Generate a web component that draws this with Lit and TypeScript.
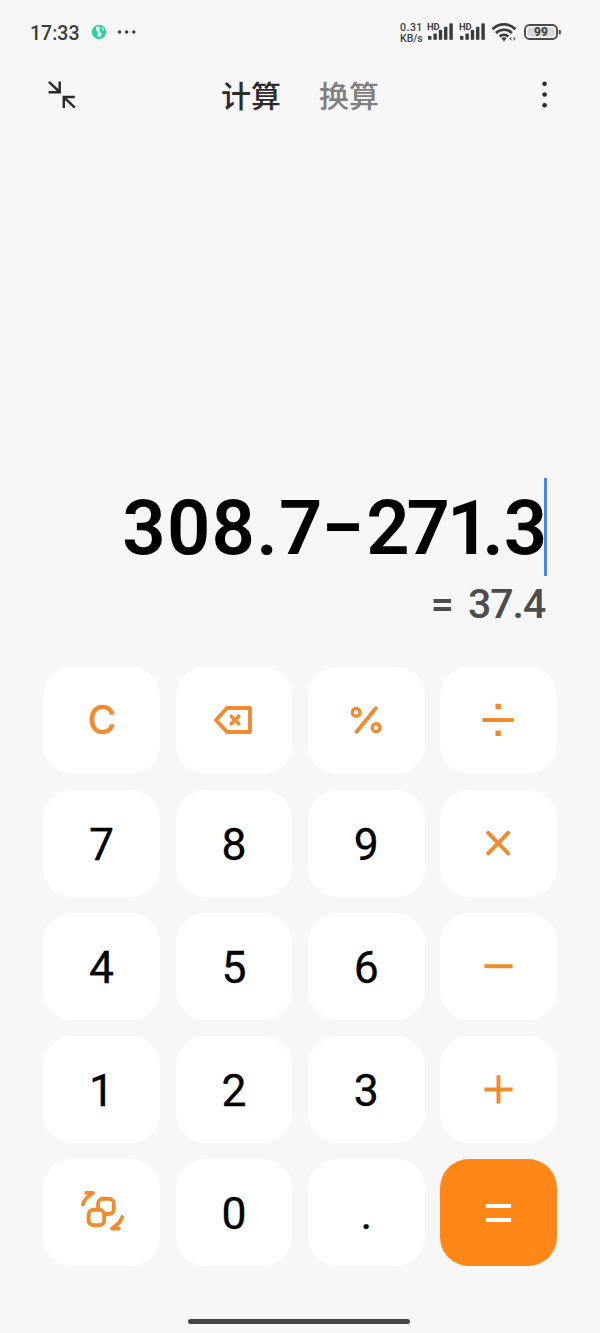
import { LitElement, html, svg, css } from "lit";
import { customElement, property } from "lit/decorators.js";

const signal = svg`
  <rect x="1" y="14" width="3.4" height="3.8"/><rect x="6.4" y="11.5" width="3.4" height="6.3"/>
  <rect x="11.8" y="8" width="3.4" height="9.8"/><rect x="17" y="4.8" width="3.4" height="13"/>
  <rect x="22.4" y="1.4" width="3.4" height="16.4"/>`;

@customElement("status-bar")
class StatusBar extends LitElement {
  static styles = css`
    :host { display: flex; height: 64px; align-items: center; color: #3c3c3c; box-sizing: border-box;
      padding: 0 38px 0 30px; font-family: Roboto, "Noto Sans", sans-serif; }
    .time { font-size: 19.5px; font-weight: 500; line-height: 24px; width: 62px; letter-spacing: 0; padding-top: 3px; }
    .left { flex: 1; }
    .rate { width: 27px; font-size: 10.5px; line-height: 10.5px; font-weight: 500; padding-top: 3px; white-space: nowrap; }
    .rate span { display: block; }
    .num { letter-spacing: 0.5px; }
    .sig { position: relative; width: 32px; height: 20px; }
    .sig svg { display: block; }
    .hd { position: absolute; left: 0; top: 0; font: 700 9.4px/10px Roboto, sans-serif; }
    svg { flex: none; }
    .wifi { margin-right: 6px; }
    .batt { position: relative; width: 38px; height: 18px; }
    .batt svg { display: block; }
    .pct { position: absolute; left: 0; top: 0; width: 34px; text-align: center; font: 700 12px/18px Roboto, sans-serif; }
  `;
  render() {
    return html`
      <div class="time">17:33</div>
      <svg class="left" height="20" viewBox="0 0 308 20" preserveAspectRatio="xMinYMid meet">
        <circle cx="7" cy="10" r="7.2" fill="#2bd0a0"/>
        <path d="M4 4.5 L7.5 4.8 L8.3 7 L7.6 10 A2.4 2.4 0 1 1 5.3 13.6 L6 10.5 L4.2 8.2 Z" fill="#e9fff8"/>
        <path d="M9.5 4.2 L12 6.5 L11.8 9.5 L9.6 7.6 Z" fill="#8df0d4"/>
        <g fill="#3c3c3c"><circle cx="27.6" cy="10" r="1.7"/><circle cx="34.6" cy="10" r="1.7"/><circle cx="41.8" cy="10" r="1.7"/></g>
      </svg>
      <div class="rate"><span class="num">0.31</span><span>KB/s</span></div>
      <div class="sig"><span class="hd">HD</span><svg width="28" height="20" fill="#3c3c3c">${signal}</svg></div>
      <div class="sig"><span class="hd">HD</span><svg width="28" height="20" fill="#3c3c3c">${signal}</svg></div>
      <svg class="wifi" width="27" height="20" viewBox="0 0 27 20" fill="none" stroke="#3c3c3c" stroke-width="2.7">
        <path d="M1.6 7.2 A16 16 0 0 1 24.4 7.2"/><path d="M5 11 A11.5 11.5 0 0 1 21 11"/><path d="M8.6 14.6 A6.5 6.5 0 0 1 17.4 14.6"/>
        <path d="M10.4 15.9 L13 19.4 L15.6 15.9 Q13 14.4 10.4 15.9Z" fill="#3c3c3c" stroke="none"/>
        <path d="M18 16.8 l2.4 -2 v4 Z M24.8 16.8 l-2.2 -2.2 v4.4 Z" fill="#666" stroke="none"/>
      </svg>
      <div class="batt">
        <svg width="38" height="18"><rect x="1" y="2" width="32" height="14" rx="4.5" fill="none" stroke="#4a4a4a" stroke-width="1.9"/>
          <rect x="3.6" y="4.6" width="26.8" height="8.8" rx="2" fill="#d8d8d8"/><rect x="34.8" y="6.8" width="2" height="4.6" rx="1" fill="#4a4a4a"/></svg>
        <span class="pct">99</span>
      </div>`;
  }
}

const icons: Record<string, unknown> = {
  delete: svg`<path d="M74 41 H51 L40 53 L51 65 H74 Z" stroke-width="3.9"/>
    <path d="M55.2 49.2 l7.6 7.6 m0 -7.6 l-7.6 7.6" stroke-width="3.5"/>`,
  percent: svg`<circle cx="48.2" cy="45.4" r="3.9" stroke-width="3.4"/><circle cx="68.2" cy="60.7" r="3.9" stroke-width="3.4"/>
    <path d="M67.9 41.2 L48.6 64.8" stroke-width="3.8"/>`,
  divide: svg`<path d="M44.6 53 H71.8" stroke-width="4" stroke-linecap="square"/>
    <g fill="#f08c2e" stroke="none"><rect x="55.5" y="36.8" width="5.4" height="5.4"/><rect x="55.5" y="63.6" width="5.4" height="5.4"/></g>`,
  multiply: svg`<path d="M48.2 42.9 l20 20.4 m0 -20.4 l-20 20.4" stroke-width="4"/>`,
  minus: svg`<path d="M46.4 53.2 H70.6" stroke-width="4" stroke-linecap="square"/>`,
  plus: svg`<path d="M46.4 53.4 H70.6 M58.5 41.3 V65.5" stroke-width="4" stroke-linecap="square"/>`,
  equals: svg`<path d="M47.9 46.9 H69.1 M47.9 61 H69.1" stroke="#fff" stroke-width="4" stroke-linecap="square"/>`,
  convert: svg`<rect x="55.1" y="39.8" width="15.8" height="15.2" rx="5" stroke-width="3.9"/>
    <rect x="45.6" y="50.8" width="15.6" height="15.4" rx="5" stroke-width="3.9" fill="#fff"/>
    <path d="M39.8 45.5 C41.4 41.2 43.2 38.6 46.6 36.6 L50 33.9 H43.2" stroke-width="3.8"/>
    <path d="M79.2 58 C77.6 62.3 75.8 64.9 72.4 66.9 L69 69.6 H75.8" stroke-width="3.8"/>`,
};

@customElement("calc-key")
class CalcKey extends LitElement {
  @property() label = "";
  @property() icon = "";
  static styles = css`
    :host { display: grid; place-items: center; height: 106.9px; border-radius: 29px; background: #fff;
      color: #000; font: 400 44.5px/52px Roboto, "Noto Sans", sans-serif; }
    :host([accent]) { background: #ff8718; }
    :host([clear]) { color: #f08c2e; font: 500 39px/46px Inter, sans-serif; }
    svg { display: block; width: 116.6px; height: 106.9px; }
    .label { padding: 2px 0 0 0; -webkit-text-stroke: 0.3px currentColor; }
    :host([clear]) .label { padding: 0 0 2px 1px; }
  `;
  render() {
    return this.icon
      ? html`<svg viewBox="0 0 116.6 106.9" role="img" aria-label=${this.icon} fill="none" stroke="#f08c2e"
          stroke-linecap="round" stroke-linejoin="round">${icons[this.icon]}</svg>`
      : html`<span class="label">${this.label}</span>`;
  }
}

@customElement("app-root")
class AppRoot extends LitElement {
  static styles = css`
    :host { display: flex; flex-direction: column; height: 1333px; width: 600px; background: #f7f7f7; overflow: hidden;
      font-family: Roboto, "Noto Sans CJK SC", sans-serif; }
    .nav { display: flex; align-items: center; height: 62px; padding: 0 40px 0 46px; }
    .nav svg { flex: none; }
    .tabs { flex: 1; display: flex; justify-content: center; gap: 38px; padding: 0 6px 2px 0;
      font: 500 30px/44px "Noto Sans CJK SC", sans-serif; color: #2b2b2b; }
    .off { color: #808080; }
    .display { flex: 1; display: flex; flex-direction: column; align-items: flex-end; justify-content: flex-end; padding: 0 53.3px 0 0; }
    .expr { display: flex; align-items: center; height: 98.5px; font-size: 76px; font-weight: 600; color: #000; white-space: nowrap; }
    .text { padding-top: 3px; letter-spacing: 1.2px; }
    .seven { letter-spacing: -1.3px; }
    .minus { letter-spacing: 2.7px; }
    .two { letter-spacing: -3.3px; }
    .seven2 { letter-spacing: -2.8px; }
    .one { letter-spacing: -8.3px; }
    .dot { letter-spacing: 0; }
    .end { letter-spacing: -3.5px; }
    .caret { width: 3px; height: 98.5px; background: #4a86e8; }
    .result { display: flex; font-size: 41px; line-height: 54px; font-weight: 500; color: #4d4d4d; padding: 1px 1.5px 0 0; white-space: pre; letter-spacing: -1px; word-spacing: 6px; }
    .keys { display: grid; grid-template-columns: repeat(4, 1fr); gap: 16.15px 15.8px; padding: 0 43.3px; margin-top: 36px; }
    .foot { height: 66.8px; flex: none; display: flex; justify-content: center; align-items: flex-end; box-sizing: border-box; padding: 0 2px 9px 0; }
    .bar { width: 222px; height: 5.4px; border-radius: 3px; background: #444; }
  `;
  render() {
    return html`
      <status-bar></status-bar>
      <div class="nav">
        <svg width="32" height="32" viewBox="46 79 32 32" fill="none" stroke="#2b2b2b" stroke-width="2.5">
          <path d="M48.9 81.8 L59.6 92 M59.7 81.4 V92.2 H48.6 M63.8 107.9 V97.1 H74.8 M63.8 97.1 L74.8 107.6"/></svg>
        <div class="tabs"><span>计算</span><span class="off">换算</span></div>
        <svg width="32" height="32" viewBox="528 79 32 32" fill="#2b2b2b"><circle cx="544.6" cy="83.8" r="2.3"/><circle cx="544.6" cy="94.5" r="2.3"/><circle cx="544.6" cy="105.3" r="2.3"/></svg>
      </div>
      <div class="display">
        <div class="expr"><span class="text">308.<span class="seven">7</span><span class="minus">−</span><span class="two">2</span><span class="seven2">7</span><span class="one">1</span><span class="dot">.</span><span class="end">3</span></span><span class="caret"></span></div>
        <div class="result">= 37.4</div>
      </div>
      <div class="keys">
        <calc-key clear label="C"></calc-key><calc-key icon="delete"></calc-key><calc-key icon="percent"></calc-key><calc-key icon="divide"></calc-key>
        <calc-key label="7"></calc-key><calc-key label="8"></calc-key><calc-key label="9"></calc-key><calc-key icon="multiply"></calc-key>
        <calc-key label="4"></calc-key><calc-key label="5"></calc-key><calc-key label="6"></calc-key><calc-key icon="minus"></calc-key>
        <calc-key label="1"></calc-key><calc-key label="2"></calc-key><calc-key label="3"></calc-key><calc-key icon="plus"></calc-key>
        <calc-key icon="convert"></calc-key><calc-key label="0"></calc-key><calc-key label="."></calc-key><calc-key accent icon="equals"></calc-key>
      </div>
      <div class="foot"><div class="bar"></div></div>`;
  }
}
